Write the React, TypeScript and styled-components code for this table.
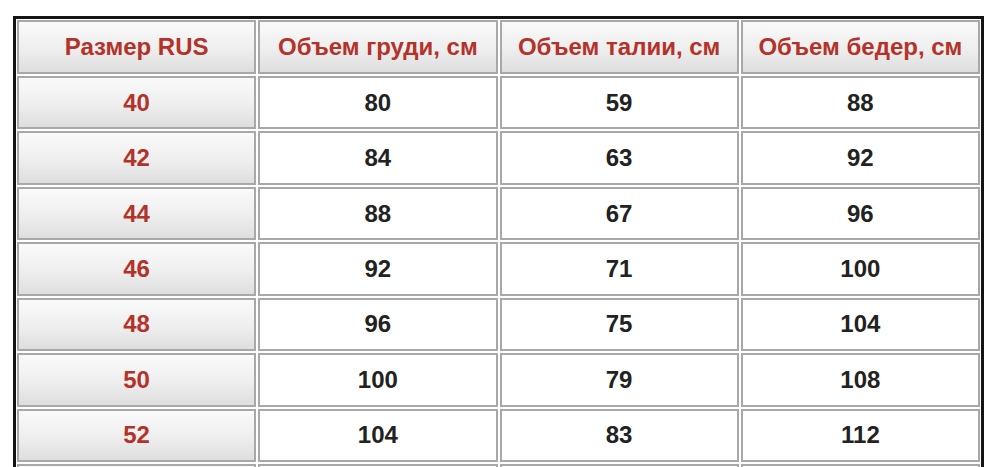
import React from "react";
import styled, { createGlobalStyle } from "styled-components";

const Global = createGlobalStyle`
  html, body { margin: 0; padding: 0; background: #ffffff; }
  body { font-family: "Liberation Sans", Arial, sans-serif; overflow: hidden; }
`;

const Page = styled.div`
  padding: 16px 0 0 13px;
  height: 467px;
  box-sizing: border-box;
  overflow: hidden;
`;

const Table = styled.div`
  width: 971px;
  box-sizing: border-box;
  border: 3px solid #141414;
  padding: 1px;
  background: #ffffff;
  display: grid;
  grid-template-columns: repeat(4, 1fr);
  grid-auto-rows: 53.45px;
  grid-template-rows: 54px;
  gap: 2px;
`;

const Cell = styled.div<{ $shaded?: boolean; $red?: boolean }>`
  box-sizing: border-box;
  border: 2px solid #a8a8a8;
  display: flex;
  align-items: center;
  justify-content: center;
  font-weight: bold;
  font-size: 24px;
  color: ${(p) => (p.$red ? "#b3332a" : "#222222")};
  background: ${(p) =>
    p.$shaded
      ? "linear-gradient(to bottom, #fafafa 0%, #eeeeee 55%, #dedede 100%)"
      : "#ffffff"};
`;

const headers = ["Размер RUS", "Объем груди, см", "Объем талии, см", "Объем бедер, см"];

const rows: [string, string, string, string][] = [
  ["40", "80", "59", "88"],
  ["42", "84", "63", "92"],
  ["44", "88", "67", "96"],
  ["46", "92", "71", "100"],
  ["48", "96", "75", "104"],
  ["50", "100", "79", "108"],
  ["52", "104", "83", "112"],
];

export default function App() {
  return (
    <>
      <Global />
      <Page>
        <Table>
          {headers.map((h) => (
            <Cell key={h} $shaded $red>
              {h}
            </Cell>
          ))}
          {rows.map((r) =>
            r.map((v, i) => (
              <Cell key={r[0] + "-" + i} $shaded={i === 0} $red={i === 0}>
                {v}
              </Cell>
            ))
          )}
          {[0, 1, 2, 3].map((i) => (
            <Cell key={"next-" + i} $shaded={i === 0} />
          ))}
        </Table>
      </Page>
    </>
  );
}
